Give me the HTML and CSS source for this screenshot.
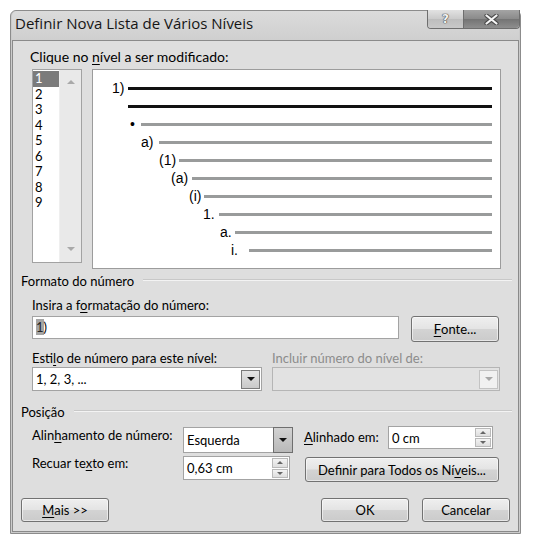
FILE: index.html
```html
<!DOCTYPE html>
<html lang="pt-BR">
<head>
<meta charset="utf-8">
<title>Definir Nova Lista de Vários Níveis</title>
<link rel="stylesheet" href="styles.css">
</head>
<body>
<div class="window">
  <div class="titlebar">
    <div class="title">Definir Nova Lista de Vários Níveis</div>
    <div class="caption-buttons">
      <div class="cbtn help"><span class="qmark">?</span></div>
      <div class="cbtn close">
        <svg width="15" height="11" viewBox="0 0 15 11"><path d="M2.5 1.5L12.5 9.5M12.5 1.5L2.5 9.5" stroke="#4a4a4a" stroke-width="4.2" stroke-linecap="round"/><path d="M2.5 1.5L12.5 9.5M12.5 1.5L2.5 9.5" stroke="#f4f4f4" stroke-width="2.2" stroke-linecap="round"/></svg>
      </div>
    </div>
  </div>
  <div class="client">
    <div class="label top-label">Clique no <u>n</u>ível a ser modificado:</div>
    <div class="level-row">
      <div class="listbox">
        <ul class="items">
          <li class="sel">1</li><li>2</li><li>3</li><li>4</li><li>5</li><li>6</li><li>7</li><li>8</li><li>9</li>
        </ul>
        <div class="vscroll">
          <span class="sarrow up"></span>
          <span class="sarrow down"></span>
        </div>
      </div>
      <div class="preview">
        <div class="prow r0 dark"><span class="num">1)</span><span class="bar"></span></div>
        <div class="prow r1 dark"><span class="bar"></span></div>
        <div class="prow r2"><span class="num">•</span><span class="bar"></span></div>
        <div class="prow r3"><span class="num">a)</span><span class="bar"></span></div>
        <div class="prow r4"><span class="num">(1)</span><span class="bar"></span></div>
        <div class="prow r5"><span class="num">(a)</span><span class="bar"></span></div>
        <div class="prow r6"><span class="num">(i)</span><span class="bar"></span></div>
        <div class="prow r7"><span class="num">1.</span><span class="bar"></span></div>
        <div class="prow r8"><span class="num">a.</span><span class="bar"></span></div>
        <div class="prow r9"><span class="num">i.</span><span class="bar"></span></div>
      </div>
    </div>

    <div class="group-head"><span>Formato do número</span><i class="rule"></i></div>
    <div class="group-body">
      <div class="label first">Insira a f<u>o</u>rmatação do número:</div>
      <div class="fmt-row">
        <div class="textbox fmt"><span class="hl">1</span>)</div>
        <div class="btn fonte"><u>F</u>onte...</div>
      </div>
      <div class="style-grid">
        <div class="label">Esti<u>l</u>o de número para este nível:</div>
        <div class="label disabled">Incluir número do nível de:</div>
        <div class="combo">
          <span class="ctext">1, 2, 3, ...</span>
          <span class="dropbtn inset"><i class="tri"></i></span>
        </div>
        <div class="combo off">
          <span class="ctext"></span>
          <span class="dropbtn inset off"><i class="tri"></i></span>
        </div>
      </div>
    </div>

    <div class="group-head pos-head"><span>Posição</span><i class="rule"></i></div>
    <div class="pos-grid">
      <div class="label l-align">Alin<u>h</u>amento de número:</div>
      <div class="combo esq">
        <span class="ctext">Esquerda</span>
        <span class="dropbtn flush"><i class="tri"></i></span>
      </div>
      <div class="label l-at"><u>A</u>linhado em:</div>
      <div class="spin s-at">
        <span class="ctext">0 cm</span>
        <span class="spinbtns"><span class="sb"><i class="stri up"></i></span><span class="sb"><i class="stri down"></i></span></span>
      </div>
      <div class="label l-indent">Recuar te<u>x</u>to em:</div>
      <div class="spin s-indent">
        <span class="ctext">0,63 cm</span>
        <span class="spinbtns"><span class="sb"><i class="stri up"></i></span><span class="sb"><i class="stri down"></i></span></span>
      </div>
      <div class="btn all">Definir para Todos os Ní<u>v</u>eis...</div>
    </div>

    <div class="footer">
      <div class="btn dlg"><u>M</u>ais &gt;&gt;</div>
      <div class="btn dlg ok">OK</div>
      <div class="btn dlg">Cancelar</div>
    </div>
  </div>
</div>
</body>
</html>
```
FILE: styles.css
```css
* { box-sizing: border-box; }

body {
  margin: 0;
  background: #ffffff;
  font-family: Lato, "Open Sans", "DejaVu Sans", sans-serif;
  font-size: 13px;
  color: #000;
}

u { text-decoration: underline; text-underline-offset: 2px; text-decoration-thickness: 1px; }

.window {
  margin: 10px 0 0 10px;
  width: 511px;
  height: 524px;
  border: 1px solid #8c8c8c;
  border-radius: 6px 6px 0 0;
  background: #cbcbcb;
  padding: 0 1px 1px 1px;
  display: flex;
  flex-direction: column;
}

.titlebar {
  height: 29px;
  display: flex;
  align-items: flex-start;
  background: linear-gradient(#dbdbdb, #cfcfcf);
  border-radius: 5px 5px 0 0;
}

.title {
  padding: 3px 0 0 3px;
  font-family: "Open Sans", Lato, sans-serif;
  font-size: 15px;
  line-height: 19px;
  color: #151515;
}

.caption-buttons {
  margin-left: auto;
  margin-top: -1px;
  margin-right: -1px;
  display: flex;
  height: 19px;
  border: 1px solid #6e6e6e;
  border-top: none;
  border-radius: 0 0 4px 4px;
  overflow: hidden;
}

.cbtn {
  display: flex;
  align-items: center;
  justify-content: center;
  height: 100%;
}

.help {
  width: 36px;
  background: linear-gradient(#e2e2e2, #cacaca 50%, #bdbdbd 51%, #c8c8c8);
  border-right: 1px solid #6e6e6e;
}

.qmark {
  font-family: "DejaVu Sans", sans-serif;
  font-weight: bold;
  font-size: 12px;
  line-height: 12px;
  color: #f2f2f2;
  text-shadow: 0 0 1px #444, 0 0 1px #444, 0 0 1px #444;
}

.close {
  width: 55px;
  background: linear-gradient(#a4a4a4, #8a8a8a 50%, #747474 51%, #8e8e8e);
}

.client {
  flex: 1;
  border: 1px solid #8a8a8a;
  background: #dedede;
  padding: 8px 0 0 8px;
  display: flex;
  flex-direction: column;
}

.label {
  line-height: 16px;
  height: 16px;
  white-space: nowrap;
}

.label.disabled { color: #8c8c8c; }

.top-label { margin-left: 9px; font-size: 14px; }

.level-row {
  margin: 4px 0 0 11px;
  display: flex;
  gap: 10px;
  align-items: flex-start;
}

.listbox {
  width: 50px;
  height: 194px;
  border: 1px solid #a2a2a2;
  background: #fff;
  display: flex;
}

.items {
  list-style: none;
  margin: 0;
  padding: 1px 0 0 0;
  width: 26px;
}

.items li {
  height: 15.5px;
  line-height: 15.5px;
  padding-left: 2px;
  font-size: 13px;
}

.items li.sel {
  background: #7b7b7b;
  color: #fff;
}

.vscroll {
  flex: 1;
  background: #e9e9e9;
  border-left: 1px solid #efefef;
  display: flex;
  flex-direction: column;
  justify-content: space-between;
  align-items: center;
  padding: 10px 0 11px 0;
}

.sarrow {
  width: 0;
  height: 0;
  border-left: 4px solid transparent;
  border-right: 4px solid transparent;
}
.sarrow.up { border-bottom: 4px solid #a9a9a9; }
.sarrow.down { border-top: 4px solid #a9a9a9; }

.preview {
  width: 409px;
  height: 200px;
  border: 1px solid #9c9c9c;
  background: #fff;
  padding-top: 9px;
}

.prow {
  height: 18px;
  display: flex;
  align-items: center;
  padding-right: 8px;
  font-family: "Liberation Sans", Arial, sans-serif;
  font-size: 14px;
  line-height: 18px;
}

.num { flex: none; white-space: nowrap; }

.bar {
  flex: 1;
  height: 3px;
  background: #999b9b;
}

.dark .bar { background: #111; }

.r0 { padding-left: 19px; } .r0 .num { width: 16px; }
.r1 { padding-left: 35px; }
.r2 { padding-left: 37px; } .r2 .num { width: 11px; }
.r3 { padding-left: 48px; } .r3 .num { width: 18px; }
.r4 { padding-left: 66px; } .r4 .num { width: 20px; }
.r5 { padding-left: 78px; } .r5 .num { width: 21px; }
.r6 { padding-left: 96px; } .r6 .num { width: 15px; }
.r7 { padding-left: 110px; } .r7 .num { width: 16px; }
.r8 { padding-left: 127px; } .r8 .num { width: 15px; }
.r9 { padding-left: 138px; } .r9 .num { width: 18px; }

.group-head {
  margin-top: 4px;
  height: 16px;
  line-height: 16px;
  display: flex;
  align-items: center;
  padding-right: 6px;
}

.group-head .rule {
  flex: 1;
  margin-left: 9px;
  margin-top: -2px;
  height: 2px;
  border-top: 1px solid #c8c8c8;
  border-bottom: 1px solid #f3f3f3;
}

.group-body { padding-left: 11px; }

.group-body .first { margin-top: 8px; }

.fmt-row {
  margin-top: 3px;
  display: flex;
  gap: 12px;
  align-items: flex-start;
}

.textbox {
  background: #fff;
  border: 1px solid #a3a3a3;
  line-height: 21px;
  padding-left: 3px;
}

.fmt { width: 367px; height: 23px; }

.hl { background: #a5a5a5; color: #262626; }

.btn {
  display: flex;
  align-items: center;
  justify-content: center;
  border: 1px solid #727272;
  border-radius: 3px;
  background: linear-gradient(#efefef, #e4e4e4 48%, #d3d3d3 52%, #cbcbcb);
  box-shadow: inset 0 0 0 1px rgba(255,255,255,0.55);
  white-space: nowrap;
}

.fonte { width: 88px; height: 26px; }

.style-grid {
  margin-top: 8px;
  display: grid;
  grid-template-columns: 230px 228px;
  column-gap: 10px;
  row-gap: 1px;
}

.combo, .spin {
  position: relative;
  display: flex;
  align-items: center;
  background: #fff;
  border: 1px solid #a3a3a3;
}

.combo { height: 24px; }

.ctext { flex: 1; padding-left: 3px; white-space: nowrap; }

.dropbtn {
  flex: none;
  display: flex;
  align-items: center;
  justify-content: center;
  width: 19px;
  background: linear-gradient(#e4e4e4, #c9c9c9);
  border: 1px solid #7a7a7a;
}

.dropbtn.inset { height: 19px; margin-right: 1px; }

.dropbtn.flush { align-self: stretch; width: 20px; margin: -1px -1px -1px 0; background: linear-gradient(#d2d2d2, #b9b9b9); border-color: #6f6f6f; }

.tri {
  width: 0;
  height: 0;
  border-left: 4px solid transparent;
  border-right: 4px solid transparent;
  border-top: 4px solid #111;
}

.combo.off { background: #e2e2e2; border-color: #b5b5b5; }
.dropbtn.off { background: #f1f1f1; border-color: #c3c3c3; }
.dropbtn.off .tri { border-top-color: #a7a7a7; }

.pos-head { margin-top: 13px; }

.pos-grid {
  margin-top: 6px;
  padding-left: 11px;
  display: grid;
  grid-template-columns: 151px 110px 95px 111px;
  grid-template-rows: 30px 26px;
  align-items: start;
}

.l-align { margin-top: 1px; }
.esq { margin-top: 1px; height: 26px; width: 110px; }
.l-at { margin-top: 3px; margin-left: 11px; }
.s-at { width: 105px; height: 23px; }
.l-indent { margin-top: -1px; }
.s-indent { width: 107px; height: 24px; }
.all { grid-column: 3 / 5; margin: 1px 0 0 12px; height: 25px; }

.spinbtns {
  flex: none;
  align-self: stretch;
  width: 16px;
  margin: 1px 1px 1px 0;
  display: flex;
  flex-direction: column;
  gap: 1px;
}

.sb {
  flex: 1;
  display: flex;
  align-items: center;
  justify-content: center;
  background: linear-gradient(#f3f3f3, #dedede);
  border: 1px solid #b9b9b9;
}

.stri {
  width: 0;
  height: 0;
  border-left: 3px solid transparent;
  border-right: 3px solid transparent;
}
.stri.up { border-bottom: 3px solid #666; }
.stri.down { border-top: 3px solid #666; }

.footer {
  margin-top: 16px;
  display: flex;
  gap: 13px;
  padding-right: 8px;
}

.dlg { width: 88px; height: 24px; }

.ok { margin-left: auto; }
```
